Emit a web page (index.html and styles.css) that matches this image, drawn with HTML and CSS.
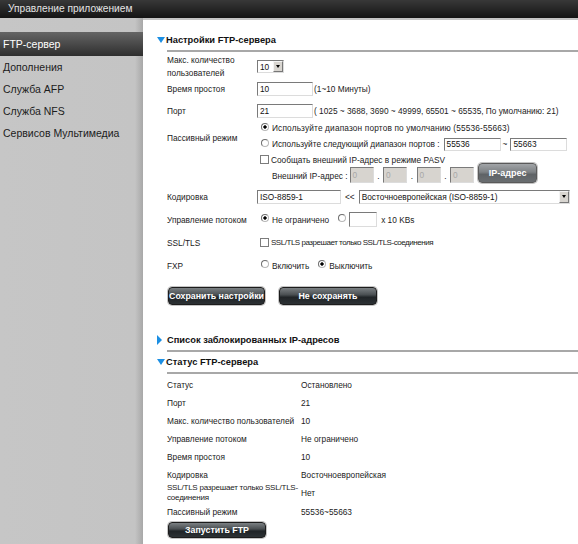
FILE: index.html
```html
<!DOCTYPE html>
<html lang="ru">
<head>
<meta charset="utf-8">
<title>Управление приложением</title>
<link rel="stylesheet" href="styles.css">
</head>
<body>
<div class="top">Управление приложением</div>
<div class="main">
  <nav class="side">
    <div class="item active">FTP-сервер</div>
    <div class="item">Дополнения</div>
    <div class="item">Служба AFP</div>
    <div class="item">Служба NFS</div>
    <div class="item">Сервисов Мультимедиа</div>
  </nav>
  <div class="content">
    <div class="sec-head"><span class="tri-down"></span>Настройки FTP-сервера</div>
    <div class="form">
      <div class="row r1">
        <div class="lbl lbl2">Макс. количество<br>пользователей</div>
        <div class="fld"><div class="sel sel-num"><span class="sel-txt">10</span><span class="sel-btn"><span class="caret"></span></span></div></div>
      </div>
      <div class="row">
        <div class="lbl">Время простоя</div>
        <div class="fld"><span class="inp w56">10</span><span class="note">(1~10 Минуты)</span></div>
      </div>
      <div class="row r3">
        <div class="lbl">Порт</div>
        <div class="fld"><span class="inp w56">21</span><span class="note">( 1025 ~ 3688, 3690 ~ 49999, 65501 ~ 65535, По умолчанию: 21)</span></div>
      </div>
      <div class="pasv">
        <div class="lbl pasv-lbl">Пассивный режим</div>
        <div class="pasv-fld">
          <div class="sub s1"><span class="radio on"></span><span class="wide">Используйте диапазон портов по умолчанию (55536-55663)</span></div>
          <div class="sub s2"><span class="radio"></span><span>Используйте следующий диапазон портов :</span><span class="inp w57 ml4">55536</span><span class="tilde">~</span><span class="inp w57">55663</span></div>
          <div class="sub s3"><span class="check"></span><span>Сообщать внешний IP-адрес в режиме PASV</span></div>
          <div class="sub s4"><span class="ext">Внешний IP-адрес :</span><span class="inp dis">0</span><span class="dot">.</span><span class="inp dis">0</span><span class="dot">.</span><span class="inp dis">0</span><span class="dot">.</span><span class="inp dis">0</span><span class="btn btn-ip">IP-адрес</span></div>
        </div>
      </div>
      <div class="row">
        <div class="lbl">Кодировка</div>
        <div class="fld"><span class="inp w84">ISO-8859-1</span><span class="ll">&lt;&lt;</span><div class="sel sel-enc"><span class="sel-txt">Восточноевропейская (ISO-8859-1)</span><span class="sel-btn"><span class="caret"></span></span></div></div>
      </div>
      <div class="row">
        <div class="lbl">Управление потоком</div>
        <div class="fld"><span class="radio on"></span><span>Не ограничено</span><span class="radio gap"></span><span class="inp w28">&nbsp;</span><span class="note2">x 10 KBs</span></div>
      </div>
      <div class="row">
        <div class="lbl">SSL/TLS</div>
        <div class="fld"><span class="check"></span><span class="ssl">SSL/TLS разрешает только SSL/TLS-соединения</span></div>
      </div>
      <div class="row">
        <div class="lbl">FXP</div>
        <div class="fld"><span class="radio"></span><span>Включить</span><span class="radio gap on"></span><span>Выключить</span></div>
      </div>
      <div class="btns">
        <span class="btn btn-save">Сохранить настройки</span>
        <span class="btn btn-cancel">Не сохранять</span>
      </div>
    </div>

    <div class="sec-head sec-blocked"><span class="tri-right"></span>Список заблокированных IP-адресов</div>
    <div class="sec-head"><span class="tri-down"></span>Статус FTP-сервера</div>

    <div class="stat">
      <div class="stat-row"><div class="stat-lbl">Статус</div><div>Остановлено</div></div>
      <div class="stat-row"><div class="stat-lbl">Порт</div><div>21</div></div>
      <div class="stat-row"><div class="stat-lbl">Макс. количество пользователей</div><div>10</div></div>
      <div class="stat-row"><div class="stat-lbl">Управление потоком</div><div>Не ограничено</div></div>
      <div class="stat-row"><div class="stat-lbl">Время простоя</div><div>10</div></div>
      <div class="stat-row"><div class="stat-lbl">Кодировка</div><div>Восточноевропейская</div></div>
      <div class="stat-row"><div class="stat-lbl two ssl2">SSL/TLS разрешает только SSL/TLS-<br>соединения</div><div>Нет</div></div>
      <div class="stat-row last"><div class="stat-lbl">Пассивный режим</div><div>55536~55663</div></div>
      <span class="btn btn-start">Запустить FTP</span>
    </div>
  </div>
</div>
</body>
</html>
```

FILE: styles.css
```css
html, body {
  margin: 0;
  padding: 0;
}
body {
  width: 578px;
  height: 544px;
  overflow: hidden;
  font-family: "Liberation Sans", Arial, sans-serif;
  background: #c4c4c4;
  color: #222;
}
.top {
  height: 18px;
  line-height: 18px;
  padding-left: 8px;
  font-size: 10.2px;
  color: #e4e4e4;
  background: linear-gradient(#383838, #141414);
}
.main {
  display: flex;
  height: 526px;
}
.side {
  width: 143px;
  flex: none;
  box-sizing: border-box;
  padding-top: 14px;
  background: linear-gradient(to right, #c6c6c6 0, #c4c4c4 135px, #a8a8a8 143px);
}
.item {
  height: 22px;
  line-height: 22px;
  padding-left: 3px;
  font-size: 10.5px;
  color: #1c1c1c;
  white-space: nowrap;
}
.item.active {
  height: 24px;
  line-height: 24px;
  color: #fff;
  background: linear-gradient(#656565, #2e2e2e);
}
.content {
  flex: 1;
  margin-top: 2px;
  padding: 10px 0 0 24px;
  background: #fff;
  font-size: 8.3px;
}
.sec-head {
  display: flex;
  align-items: center;
  height: 20px;
  border-bottom: 2px solid #a8a8a8;
  font-weight: bold;
  font-size: 9.3px;
  color: #111;
  white-space: nowrap;
}
.sec-blocked {
  margin-top: 25px;
}
.tri-down {
  width: 0;
  height: 0;
  margin-left: -10px;
  margin-right: 1px;
  border-left: 4.5px solid transparent;
  border-right: 4.5px solid transparent;
  border-top: 6px solid #1c8fe3;
}
.tri-right {
  width: 0;
  height: 0;
  margin-left: -10px;
  margin-right: 5px;
  border-top: 5px solid transparent;
  border-bottom: 5px solid transparent;
  border-left: 5px solid #1c8fe3;
}
.row {
  display: flex;
  align-items: center;
  height: 23px;
  white-space: nowrap;
}
.r1 {
  height: 25px;
  box-sizing: border-box;
  padding-top: 4px;
}
.r3 {
  height: 21px;
}
.lbl {
  width: 90px;
  flex: none;
}
.lbl2 {
  line-height: 12.5px;
}
.fld {
  display: flex;
  align-items: center;
}
.ssl {
  font-size: 8px;
  letter-spacing: -0.47px;
}
.ssl2 {
  font-size: 8px;
  letter-spacing: -0.22px;
}
.wide {
  letter-spacing: 0.15px;
}
.inp {
  display: block;
  box-sizing: border-box;
  height: 14px;
  line-height: 12px;
  padding-left: 2px;
  background: #fff;
  border: 1px solid #dcdcdc;
  border-top-color: #7a7a7a;
  border-left-color: #7a7a7a;
  color: #111;
  overflow: hidden;
  letter-spacing: 0;
}
.w56 { width: 56px; }
.w57 { width: 57px; height: 13px; line-height: 11px; }
.w84 { width: 84px; }
.w28 { width: 28px; height: 15px; }
.ml4 { margin-left: 4px; }
.note { margin-left: 1px; }
.note2 { margin-left: 4px; }
.tilde { margin: 0 3px 0 2px; }
.ll { margin: 0 4px 0 4px; }
.sel {
  display: flex;
  align-items: center;
  box-sizing: border-box;
  height: 14px;
  background: #fff;
  border: 1px solid #dcdcdc;
  border-top-color: #7a7a7a;
  border-left-color: #7a7a7a;
}
.sel-num { width: 27px; height: 13px; }
.sel-enc { width: 211px; }
.sel-txt {
  flex: 1;
  padding-left: 2px;
  overflow: hidden;
  color: #111;
}
.sel-btn {
  display: flex;
  align-items: center;
  justify-content: center;
  box-sizing: border-box;
  width: 10px;
  height: 100%;
  background: #d8d5d0;
  border: 1px solid #f4f4f4;
  border-right-color: #777;
  border-bottom-color: #777;
}
.caret {
  width: 0;
  height: 0;
  border-left: 2.5px solid transparent;
  border-right: 2.5px solid transparent;
  border-top: 3px solid #000;
}
.radio {
  display: block;
  flex: none;
  box-sizing: border-box;
  width: 8px;
  height: 8px;
  margin: 0 3px 3px 4px;
  border-radius: 50%;
  border: 1px solid #b8b8b8;
  border-top-color: #6e6e6e;
  border-left-color: #6e6e6e;
  background: #fff;
}
.radio.on {
  background: radial-gradient(circle, #000 0, #000 1.4px, #fff 1.9px);
}
.radio.gap {
  margin-left: 9px;
}
.check {
  display: block;
  flex: none;
  box-sizing: border-box;
  width: 9px;
  height: 9px;
  margin: 0 2px 1px 3px;
  border: 1px solid #7c7c7c;
  background: #fff;
}
.pasv {
  display: flex;
  white-space: nowrap;
}
.pasv-lbl {
  padding-top: 10.5px;
  line-height: 13px;
}
.pasv-fld {
  display: flex;
  flex-direction: column;
}
.sub {
  display: flex;
  align-items: center;
}
.s1 { height: 14px; }
.s2 { height: 18px; }
.s3 { height: 14px; }
.s4 { height: 18px; padding-left: 15px; }
.ext { margin-right: 2px; }
.inp.dis {
  width: 24px;
  height: 16px;
  line-height: 14px;
  margin-bottom: 2px;
  background: #d7d4cf;
  color: #a8a8a8;
}
.dot {
  width: 9.5px;
  text-align: center;
}
.btn {
  display: flex;
  align-items: center;
  justify-content: center;
  box-sizing: border-box;
  color: #fff;
  font-weight: bold;
  font-size: 8.8px;
  white-space: nowrap;
  border-radius: 4px;
  border: 1px solid #1c1c1c;
  box-shadow: 0 0 0 1px #c4c4c4;
  background: linear-gradient(#7b8083 0%, #4a4f52 42%, #202427 58%, #2c3134 100%);
}
.btn-ip {
  width: 59px;
  height: 20px;
  margin: 0 0 6px 4px;
  font-size: 9px;
  border-color: #5a5a5a;
  background: linear-gradient(#a2a5a8 0%, #7d8184 45%, #5f6366 58%, #6a6e71 100%);
}
.btns {
  display: flex;
  gap: 14px;
  margin-top: 10px;
  padding-left: 1px;
}
.btn-save { width: 97px; height: 18px; }
.btn-cancel { width: 98px; height: 18px; }
.stat {
  margin-top: 2px;
}
.stat-row {
  display: flex;
  align-items: center;
  height: 18px;
  white-space: nowrap;
}
.stat-row.last {
  height: 20px;
}
.stat-lbl {
  width: 134px;
  flex: none;
}
.stat-lbl.two {
  line-height: 10px;
}
.btn-start {
  width: 98px;
  height: 16px;
  margin-left: 1px;
}
```
